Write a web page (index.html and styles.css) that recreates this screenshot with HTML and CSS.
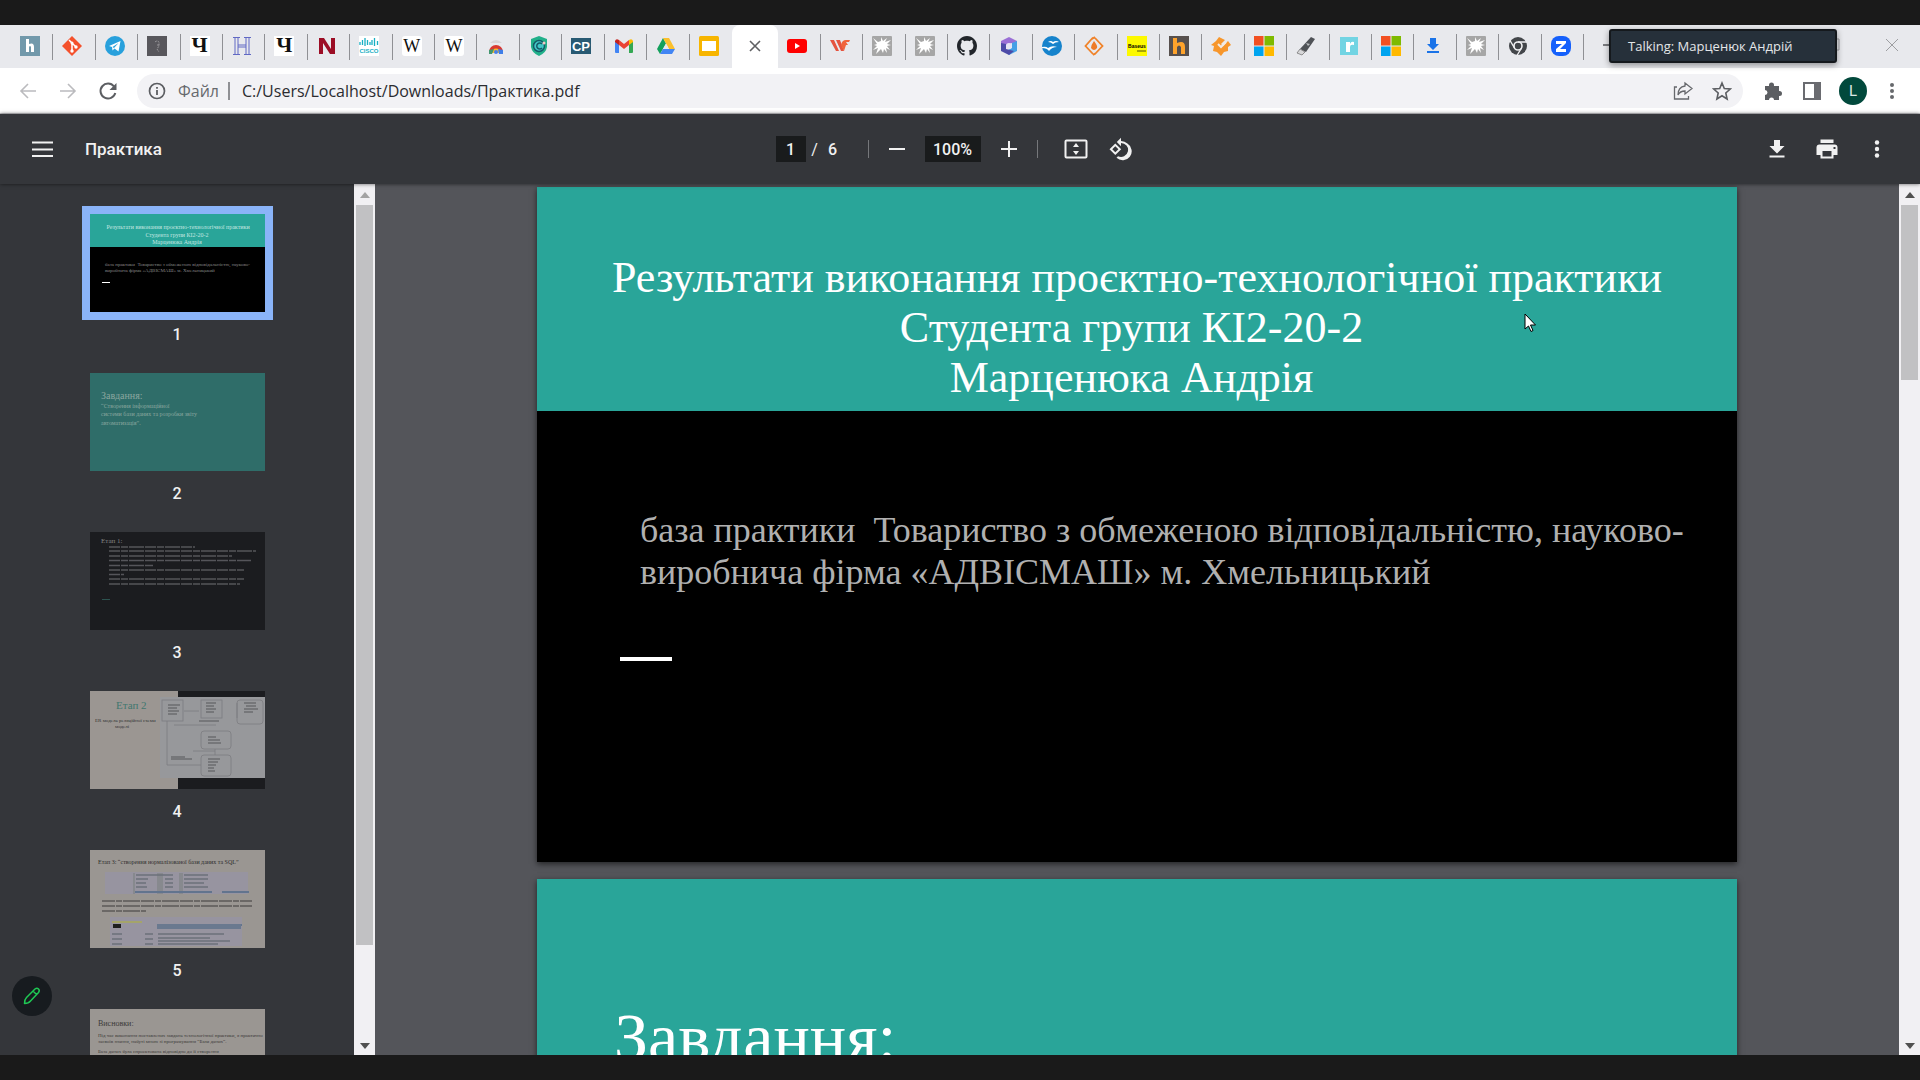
FILE: index.html
```html
<!DOCTYPE html>
<html lang="uk">
<head>
<meta charset="utf-8">
<title>Практика</title>
<link rel="stylesheet" href="styles.css">
</head>
<body>
<svg class="defs" aria-hidden="true">
  <symbol id="splat" viewBox="0 0 20 20"><rect width="20" height="20" rx="1" fill="#a6a6a6"/><path d="M9 5l0-4 2 4 4-3-2 4 6-2-4 4 4 1-4 1 3 4-4-2 1 5-3-4-1 4-2-4-5 5 2-6-5 2 4-4-3-1 3-1-4-6 5 4z" fill="#fff"/></symbol>
  <symbol id="windows" viewBox="0 0 20 20"><path fill="#f25022" d="M0 0h9.500v9.500H0z"/><path fill="#7fba00" d="M10.500 0H20v9.500h-9.500z"/><path fill="#00a4ef" d="M0 10.500h9.500V20H0z"/><path fill="#ffb900" d="M10.500 10.500H20V20h-9.500z"/></symbol>
</svg>

<div class="browser">
  <header class="tabstrip">
    <nav class="tabs" aria-label="Вкладки">
      <a class="tab" href="#"><svg viewBox="0 0 20 20"><rect width="20" height="20" fill="#7299ab"/><path d="M6 3h3v5q5-2 5 3v5h-3v-5q-1-2-2 0v5H6z" fill="#fff"/></svg></a>
      <a class="tab" href="#"><svg viewBox="0 0 20 20"><path d="M10 0l10 10-10 10L0 10z" fill="#f4512c"/><path d="M7 4l3 3v8M10 7l4 4" stroke="#fff" stroke-width="1.500" fill="none"/><circle cx="10" cy="7" r="1.500" fill="#fff"/><circle cx="10" cy="15" r="1.700" fill="#fff"/><circle cx="14" cy="11" r="1.700" fill="#fff"/></svg></a>
      <a class="tab" href="#"><svg viewBox="0 0 20 20"><circle cx="10" cy="10" r="10" fill="#28a0dc"/><path d="M4 10l11.500-5-2 10.500-4-3-2 2-.5-3.500z" fill="#fff"/><path d="M7.500 11l6-4-4.500 5z" fill="#28a0dc"/></svg></a>
      <a class="tab" href="#"><svg viewBox="0 0 20 20"><rect width="20" height="20" fill="#58575c"/><path d="M8 6q2-2 4 0v4l-2 3 2 3M11 8v2" fill="none" stroke="#99979b" stroke-dasharray="2 1"/></svg></a>
      <a class="tab" href="#"><span class="letter letter-bold">Ч</span></a>
      <a class="tab" href="#"><svg viewBox="0 0 20 20"><path d="M1 1.500h7M1 18.500h7M12 1.500h7M12 18.500h7M3 1.500v17M6 1.500v17M14 1.500v17M17 1.500v17M6 9h8M6 11h8" fill="none" stroke="#6068c4"/></svg></a>
      <a class="tab" href="#"><span class="letter letter-bold">Ч</span></a>
      <a class="tab" href="#"><svg viewBox="0 0 20 20"><path d="M2 2h5l7 11V2h4v16h-5L6 7v11H2z" fill="#9c0d25"/></svg></a>
      <a class="tab" href="#"><svg viewBox="0 0 20 20"><rect width="20" height="20" fill="#fff"/><path d="M1 6v3M3.500 4v5M6 2v8M8.500 4v5M11 6v3M13 4v5M15.500 2v8M18.500 5v4" stroke="#18afc4" stroke-width="1.300"/><text class="sans" x="10" y="17" text-anchor="middle" font-size="6" font-weight="bold" fill="#18afc4">CISCO</text></svg></a>
      <a class="tab" href="#"><span class="letter letter-wiki">W</span></a>
      <a class="tab" href="#"><span class="letter letter-wiki">W</span></a>
      <a class="tab" href="#"><svg viewBox="0 0 20 20"><path d="M4 7q6-6 12 0" fill="#d8d5d9"/><path d="M3 16a7 7 0 0 1 14 0z" fill="#d93830"/><path d="M5.500 17a4.500 4.500 0 0 1 9 0z" fill="#f5b82c"/><path d="M3 14l5-1-2 5H3z" fill="#43966f"/><path d="M12 13l5 1v4h-4z" fill="#3f7ee8"/><circle cx="10" cy="16" r="2" fill="#4680ec"/></svg></a>
      <a class="tab" href="#"><svg viewBox="0 0 20 20"><path d="M10 0l8 3v8q-1 6-8 9-7-3-8-9V3z" fill="#21b08a"/><circle cx="10" cy="10" r="5.500" fill="#42c8c8" stroke="#155b67" stroke-width="1.500"/><path d="M13 8a3 3 0 1 0 0 4" fill="none" stroke="#155b67" stroke-width="1.500"/><circle cx="15" cy="7" r="1.500" fill="#f4c6c4"/></svg></a>
      <a class="tab" href="#"><svg viewBox="0 0 20 20"><rect y="2" width="20" height="16" fill="#285a73"/><text class="sans" x="10" y="15" text-anchor="middle" font-size="13" font-weight="bold" fill="#fff">CP</text></svg></a>
      <a class="tab" href="#"><svg viewBox="0 0 20 20"><path d="M1 5l4 3v9H2q-1 0-1-1z" fill="#4285f4"/><path d="M19 5l-4 3v9h3q1 0 1-1z" fill="#34a853"/><path d="M5 4l5 4 5-4v5l-5 4-5-4z" fill="#ea4335"/><path d="M1 5q1-3 4-1v5L1 6z" fill="#c5221f"/><path d="M19 5q-1-3-4-1v5l4-3z" fill="#fbbc04"/></svg></a>
      <a class="tab" href="#"><svg viewBox="0 0 20 20"><path d="M7 2l3 5.500L4 18l-3-5z" fill="#13a05c"/><path d="M7 2h6l6 11h-6z" fill="#fbc02d"/><path d="M7 13h12l-3 5H4z" fill="#4285f4"/><path d="M10 7.500L13 13H7z" fill="#e8e9ed"/></svg></a>
      <a class="tab" href="#"><svg viewBox="0 0 20 20"><rect width="20" height="20" rx="1.500" fill="#f7b500"/><rect x="3" y="5" width="14" height="10" fill="#fff"/></svg></a>
      <a class="tab tab-active" href="#" aria-label="Практика"><svg viewBox="0 0 20 20"><path d="M5 5l10 10M15 5L5 15" stroke="#5f6063" stroke-width="1.600"/></svg></a>
      <a class="tab" href="#"><svg viewBox="0 0 20 20"><rect y="3" width="20" height="14" rx="3" fill="#f00"/><path d="M8 7l5 3-5 3z" fill="#fff"/></svg></a>
      <a class="tab" href="#"><svg viewBox="0 0 20 20"><path d="M0 4h4l5 11H6zM6 4h4l4 11h-3z" fill="#e5533f"/><path d="M14 15l-3-6q1-5 5-5h4l-1 2h-3l2 3h-2l-1 3z" fill="#f0643c"/></svg></a>
      <a class="tab" href="#"><svg><use href="#splat"/></svg></a>
      <a class="tab" href="#"><svg><use href="#splat"/></svg></a>
      <a class="tab" href="#"><svg viewBox="0 0 16 16"><path fill="#22262b" d="M8 0C3.580 0 0 3.580 0 8c0 3.540 2.290 6.530 5.470 7.590.4.070.55-.17.55-.38 0-.19-.01-.82-.01-1.490-2.010.37-2.530-.49-2.690-.94-.09-.23-.48-.94-.82-1.130-.28-.15-.68-.52-.01-.53.63-.01 1.080.58 1.230.82.72 1.210 1.870.87 2.330.66.07-.52.28-.87.51-1.070-1.780-.2-3.640-.89-3.640-3.950 0-.87.31-1.590.82-2.150-.08-.2-.36-1.020.08-2.120 0 0 .67-.21 2.200.82.64-.18 1.320-.27 2-.27s1.360.09 2 .27c1.530-1.040 2.200-.82 2.200-.82.44 1.100.16 1.920.08 2.120.51.56.82 1.270.82 2.150 0 3.070-1.870 3.750-3.650 3.950.29.25.54.73.54 1.480 0 1.070-.01 1.930-.01 2.200 0 .21.15.46.55.38A8.010 8.010 0 0 0 16 8c0-4.420-3.580-8-8-8z"/></svg></a>
      <a class="tab" href="#"><svg viewBox="0 0 20 20"><path d="M10 1l8 4v5l-5-3-6 2-5 5V5z" fill="#9a6fd6"/><path d="M18 5v10l-8 4-3-4 6-3V7z" fill="#45a0e6"/><path d="M2 7v8l8 4 5-4-8-2V8z" fill="#4d4ba8"/><circle cx="10" cy="10" r="3" fill="#e6e4f4"/></svg></a>
      <a class="tab" href="#"><svg viewBox="0 0 20 20"><circle cx="10" cy="10" r="10" fill="#1683cc"/><path d="M6 6q3-2 5 0 3-2 6 0-4 0-6 2-2-2-5-2zM0 11q4-1 6 1 4-3 9-1-5 0-8 4-2-3-7-3z" fill="#fff"/></svg></a>
      <a class="tab" href="#"><svg viewBox="0 0 20 20"><path d="M9 1.500L1.500 10 9 18M11 2l7.500 8-8 8.500M8 3l3-2M12 17l-3 2" fill="none" stroke="#f08228" stroke-width="1.800"/><path d="M10 5q4 5 3 7-3 4-6 0 0-3 3-7z" fill="#ee7b27"/></svg></a>
      <a class="tab" href="#"><svg viewBox="0 0 20 20"><rect width="20" height="20" fill="#fdf900"/><text class="sans" x="10" y="12" text-anchor="middle" font-size="5" font-weight="900">Baseus</text><path d="M10 15h9" stroke="#55530a"/></svg></a>
      <a class="tab" href="#"><svg viewBox="0 0 20 20"><rect width="20" height="20" fill="#57504e"/><path d="M4 2h4v5q8-3 8 4v7h-4v-7q-2-3-4 0v7H4z" fill="#ffa32b"/></svg></a>
      <a class="tab" href="#"><svg viewBox="0 0 20 20"><path d="M8 1l6 3-4 4 2 2 5-5 3 4-3 2v4l-4 1-3 4-4-4-4-1 1-5-3-1 5-4z" fill="#f7962b"/><path d="M7 8l3 3 5-5" stroke="#f2eae4" stroke-width="2" fill="none"/></svg></a>
      <a class="tab" href="#"><svg><use href="#windows"/></svg></a>
      <a class="tab" href="#"><svg viewBox="0 0 20 20"><path d="M15 1l4 2-9 13-6-3z" fill="#4f5257"/><path d="M4 13l5 3-3 3-5-2z" fill="#d7d7d9" stroke="#777" stroke-width=".8"/><path d="M10 7l4 1-2 2z" fill="#b8babd"/></svg></a>
      <a class="tab" href="#"><svg viewBox="0 0 20 20"><rect x="1" y="1" width="18" height="18" fill="#72d4e3"/><path d="M7 6h4v2q1-3 4-2v3q-4-1-4 2v5H7z" fill="#fff"/></svg></a>
      <a class="tab" href="#"><svg><use href="#windows"/></svg></a>
      <a class="tab" href="#"><svg viewBox="0 0 20 20"><path d="M7 2h6v6h3l-6 6-6-6h3zM4 15h12v2H4z" fill="#1a73e8"/></svg></a>
      <a class="tab" href="#"><svg><use href="#splat"/></svg></a>
      <a class="tab" href="#"><svg viewBox="0 0 20 20"><circle cx="10" cy="10" r="9" fill="#43464a"/><circle cx="10" cy="10" r="4" fill="#43464a" stroke="#f1f1f3" stroke-width="1.600"/><path d="M10 6h9M6.500 12L2 4.500M13.500 12L9 19.500" stroke="#f1f1f3" stroke-width="1.400"/></svg></a>
      <a class="tab" href="#"><svg viewBox="0 0 20 20"><rect width="20" height="20" rx="8" fill="#1560fb"/><path d="M5 5h10v2l-6 6h6v3H5v-3l6-5H5z" fill="#fff"/></svg></a>
    </nav>
    <div class="window-controls">
      <svg class="ctl-new" viewBox="0 0 20 20"><path d="M3 10h14M10 3v14" stroke="#55575b" stroke-width="1.500"/></svg>
      <svg class="ctl-max" viewBox="0 0 14 14"><path d="M1 1h11v11H1z" fill="none" stroke="#9d9ea1"/></svg>
      <svg class="ctl-close" viewBox="0 0 14 14"><path d="M1 1l12 12M13 1L1 13" stroke="#9d9ea1"/></svg>
      <div class="talking">Talking: Марценюк Андрій</div>
    </div>
  </header>

  <div class="toolbar">
    <button class="nav-btn" aria-label="Назад"><svg viewBox="0 0 20 20"><path d="M18 10H3M10 3l-7 7 7 7" fill="none" stroke="#bbbbbe" stroke-width="1.600"/></svg></button>
    <button class="nav-btn" aria-label="Вперед"><svg viewBox="0 0 20 20"><path d="M2 10h15M10 3l7 7-7 7" fill="none" stroke="#bbbbbe" stroke-width="1.600"/></svg></button>
    <button class="nav-btn" aria-label="Оновити"><svg viewBox="0 0 20 20"><path d="M16 5.500A7.500 7.500 0 1 0 17.300 12" fill="none" stroke="#5c5e62" stroke-width="2"/><path d="M18.500 2v7h-7z" fill="#5c5e62"/></svg></button>
    <div class="omnibox">
      <svg class="info" viewBox="0 0 18 18"><circle cx="9" cy="9" r="7.500" fill="none" stroke="#5c5e62" stroke-width="1.700"/><path d="M9 8v5M9 5v1.800" stroke="#5c5e62" stroke-width="1.800"/></svg>
      <label class="scheme" for="url">Файл</label>
      <input class="url" id="url" type="text" value="C:/Users/Localhost/Downloads/Практика.pdf">
      <button class="box-btn" aria-label="Поділитися"><svg viewBox="0 0 20 20"><path d="M4 6H1.500v12h14v-3" fill="none" stroke="#66686c" stroke-width="1.300"/><path d="M12 2l7 5.500-7 5.500v-3q-5 0-7 4 0-8 7-9z" fill="none" stroke="#66686c" stroke-width="1.300"/></svg></button>
      <button class="box-btn" aria-label="Закладка"><svg viewBox="0 0 20 20"><path d="M10 2l2.300 5.500 6 .5-4.500 4 1.300 6-5.100-3.200L4.900 18l1.300-6L1.700 8l6-.5z" fill="none" stroke="#5c5e62" stroke-width="1.600"/></svg></button>
    </div>
    <button class="tool-btn" aria-label="Розширення"><svg viewBox="0 0 20 20"><path d="M2 5h4V4a2.500 2.500 0 0 1 5 0v1h5v5h.500a2.500 2.500 0 0 1 0 5H16v4h-5a2.500 2.500 0 0 0-5 0H2v-5a2.500 2.500 0 0 0 0-5z" fill="#5c5e62"/></svg></button>
    <button class="tool-btn" aria-label="Бічна панель"><svg viewBox="0 0 20 20"><rect x="2" y="2" width="16" height="16" fill="none" stroke="#6a6b70" stroke-width="2"/><path d="M12 2h6v16h-6z" fill="#6a6b70"/></svg></button>
    <button class="avatar" aria-label="Профіль">L</button>
    <button class="tool-btn" aria-label="Меню"><svg viewBox="0 0 20 20" fill="#66686c"><circle cx="10" cy="4" r="2"/><circle cx="10" cy="10" r="2"/><circle cx="10" cy="16" r="2"/></svg></button>
  </div>

  <div class="pdfbar">
    <div class="pdf-left">
      <button class="pdf-btn" aria-label="Бічне меню"><svg viewBox="0 0 24 24"><path d="M2 5.500h21M2 12.500h21M2 19h21" stroke="#f1f1f1" stroke-width="2"/></svg></button>
      <h1 class="pdf-title">Практика</h1>
    </div>
    <div class="pdf-mid">
      <input class="field page-no" type="text" value="1" aria-label="Сторінка">
      <span class="slash">/</span><span class="total">6</span>
      <i class="sep"></i>
      <button class="pdf-btn" aria-label="Зменшити"><svg viewBox="0 0 24 24"><path d="M4 12h16" stroke="#f1f1f1" stroke-width="2"/></svg></button>
      <input class="field zoom" type="text" value="100%" aria-label="Масштаб">
      <button class="pdf-btn" aria-label="Збільшити"><svg viewBox="0 0 24 24"><path d="M4 12h16M12 4v16" stroke="#f1f1f1" stroke-width="2"/></svg></button>
      <i class="sep"></i>
      <button class="pdf-btn" aria-label="За розміром сторінки"><svg viewBox="0 0 24 24"><rect x="1.500" y="3.500" width="21" height="17" rx="1" fill="none" stroke="#f1f1f1" stroke-width="2"/><path d="M12 6l3 4H9zM12 18l3-4H9z" fill="#f1f1f1"/></svg></button>
      <button class="pdf-btn rotate" aria-label="Повернути"><svg viewBox="0 0 24 24"><path d="M7.300 6.400L1.500 12.200l5.800 5.900 5.900-5.900zm-3 5.800l3-3 3.100 3-3.100 3.100zM19.400 6.600A9 9 0 0 0 13 4V.8L8.800 5 13 9.200V6a7 7 0 1 1-3 13.300l-1.500 1.500A9 9 0 1 0 19.400 6.600z" fill="#f1f1f1" fill-rule="evenodd"/></svg></button>
    </div>
    <div class="pdf-right">
      <button class="pdf-btn" aria-label="Завантажити"><svg viewBox="0 0 24 24"><path d="M9 3h6v6h4.500L12 16.500 4.500 9H9zM4.500 18.500h15v2h-15z" fill="#f1f1f1"/></svg></button>
      <button class="pdf-btn" aria-label="Друк"><svg viewBox="0 0 24 24"><path d="M5.500 2.500h13V6h-13zM4.500 7.500h15a3 3 0 0 1 3 3V18h-4v3.500h-13V18h-4v-7.500a3 3 0 0 1 3-3zM7.500 14v5.500h9V14zm11-4v2h2v-2z" fill="#f1f1f1" fill-rule="evenodd"/></svg></button>
      <button class="pdf-btn" aria-label="Більше"><svg viewBox="0 0 24 24" fill="#f1f1f1"><circle cx="12" cy="5.500" r="2.200"/><circle cx="12" cy="12" r="2.200"/><circle cx="12" cy="18.500" r="2.200"/></svg></button>
    </div>
  </div>

  <div class="viewer">
    <aside class="sidebar">
      <a class="thumb thumb-active" href="#p1"><svg viewBox="0 0 175 98"><path fill="#000" d="M0 0h175v98H0z"/><path fill="#29a599" d="M0 0h175v33H0z"/><g fill="#c4e6e0" font-size="6" text-anchor="middle"><text x="88" y="15">Результати виконання проєктно-технологічної практики</text><text x="87" y="23">Студента групи КІ2-20-2</text><text x="87" y="30">Марценюка Андрія</text></g><g fill="#858585" font-size="5"><text x="15" y="52">база практики&#160; Товариство з обмеженою відповідальністю, науково-</text><text x="15" y="58">виробнича фірма «АДВІСМАШ» м. Хмельницький</text></g><path fill="#fff" d="M12 68h8v1h-8z"/></svg><span class="num">1</span></a>
      <a class="thumb" href="#p2"><svg viewBox="0 0 175 98"><path fill="#2f6d69" d="M0 0h175v98H0z"/><g fill="#8aa69f" font-size="6"><text x="11" y="26" font-size="10">Завдання:</text><text x="11" y="35">“Створення інформаційної</text><text x="11" y="43">системи бази даних та розробки звіту</text><text x="11" y="52">автоматизація”.</text></g></svg><span class="num">2</span></a>
      <a class="thumb" href="#p3"><svg viewBox="0 0 175 98"><path fill="#1b1c1f" d="M0 0h175v98H0z"/><text x="11" y="11" font-size="7" fill="#858585">Етап 1:</text><path d="M19 15h86M19 19h147M19 24h123M19 28.500h142M19 33.500h44M19 38h135M19 42.500h15M19 47h135M19 52h131" stroke="#55555a" stroke-width="1.600" stroke-dasharray="11 1 7 1 15 1"/><path fill="#2d5350" d="M12 67h8v1h-8z"/></svg><span class="num">3</span></a>
      <a class="thumb" href="#p4"><svg viewBox="0 0 175 98"><path fill="#1b1c1f" d="M0 0h175v98H0z"/><path fill="#9b9692" d="M0 0h88v98H0z"/><path fill="#97989b" d="M70 6h105v81H70z"/><text x="26" y="18" font-size="11" fill="#42776f">Етап 2</text><g font-size="5" fill="#333"><text x="5" y="31">ER модель реляційної схеми</text><text x="25" y="37">моделі</text></g><g fill="none" stroke="#7c7c80" stroke-width=".8"><rect x="72" y="9" width="21" height="21"/><rect x="111" y="9" width="21" height="18"/><rect x="147" y="9" width="26" height="24" rx="3"/><rect x="111" y="40" width="30" height="18" rx="3"/><rect x="111" y="64" width="30" height="21" rx="3"/><path d="M77 30v44h34M125 58v6M103 60h22M84 34h42M94 20h15M147 12v15"/></g><path d="M78 14h12M78 17h9M78 20h11M78 23h9M116 12h10M116 15h8M116 18h10M116 21h8M154 12h12M156 15h10M154 18h14M154 21h9M118 46h8M118 49h12M118 52h13M118 68h12M118 71h10M118 74h8M118 77h6M118 80h7M81 66h14M81 68h21M109 30h20" stroke="#57575b" stroke-width="1.200"/></svg><span class="num">4</span></a>
      <a class="thumb" href="#p5"><svg viewBox="0 0 175 98"><path fill="#9a9692" d="M0 0h175v98H0z"/><text x="8" y="14" font-size="6" fill="#2e2d2c">Етап 3: “створення нормалізованої бази даних та SQL”</text><path fill="#9794a0" d="M15 22h143v22H15zM20 67h132v29H20z"/><path fill="#87898e" d="M43 23h2v21h-2zM67 23h6v21h-6zM89 23h4v21h-4z"/><path d="M46 25h36M46 29h12M46 33h10M46 37h11M75 25h8M75 29h8M75 33h8M75 37h8M94 25h24M94 29h24M94 33h20M94 37h24M68 84h66M68 88h52M68 91h72M68 94h60M22 84h10M22 89h10M22 94h10M55 84h8M55 89h8M55 94h8" stroke="#6c7079" stroke-width="1.400"/><path d="M45 42h77M132 42h27M68 75h84" stroke="#62748e" stroke-width="2"/><path fill="#6a798f" d="M67 74h84v5H67z"/><path fill="#a4a46a" d="M22 71h30v2H22z"/><path fill="#1e1f1f" d="M23 74h8v4h-8z"/><path d="M12 51h150M12 56h150M12 61h44" stroke="#5c5a58" stroke-width="1.600" stroke-dasharray="13 1 6 1 17 1"/></svg><span class="num">5</span></a>
      <a class="thumb" href="#p6"><svg viewBox="0 0 175 98"><path fill="#9a9692" d="M0 0h175v98H0z"/><text x="8" y="17" font-size="8" fill="#3b3a39">Висновки:</text><g font-size="5" fill="#3b3a39"><text x="8" y="28">Під час виконання поставлених завдань технологічної практики, я практично</text><text x="8" y="34">засвоїв знання, набуті мною зі програмування “Бази даних”.</text><text x="8" y="44">База даних була спроєктована відповідно до її створення</text></g></svg></a>
    </aside>
    <div class="scrollbar scrollbar-thumbs"><svg class="arrow arrow-off" viewBox="0 0 10 6"><path d="M5 0l5 6H0z"/></svg><div class="track"><div class="grip"></div></div><svg class="arrow" viewBox="0 0 10 6"><path d="M0 0h10L5 6z"/></svg></div>
    <main class="pages">
      <section class="page" id="p1">
        <h2 class="cover-title">Результати виконання проєктно-технологічної практики<br>Студента групи КІ2-20-2&nbsp;<br>Марценюка Андрія&nbsp;</h2>
        <div class="cover-body">
          <p class="cover-text">база практики&nbsp; Товариство з обмеженою відповідальністю, науково-<br>виробнича фірма «АДВІСМАШ» м. Хмельницький</p>
          <div class="dash"></div>
        </div>
      </section>
      <section class="page page-task" id="p2"><h2 class="task-title">Завдання:</h2></section>
    </main>
    <div class="scrollbar scrollbar-pages"><svg class="arrow" viewBox="0 0 10 6"><path d="M5 0l5 6H0z"/></svg><div class="track"><div class="grip"></div></div><svg class="arrow" viewBox="0 0 10 6"><path d="M0 0h10L5 6z"/></svg></div>
    <button class="annotate" aria-label="Малювати"><svg viewBox="0 0 20 20"><path d="M2.500 17.500q0-4 2-6l8.500-8.500q2-1.500 3.500 0t0 3.500L8.500 15q-2 2.500-6 2.500zM11 5l4 4" fill="none" stroke="#1fc854" stroke-width="1.500" stroke-linejoin="round"/></svg></button>
    <svg class="cursor" viewBox="0 0 12 19"><path d="M1 1v15l3.500-3 2.500 5.500 2-1-2.500-5.500h5z" fill="#fff" stroke="#000"/></svg>
  </div>
</div>
</body>
</html>
```
FILE: styles.css
```css
* { box-sizing: border-box; }

body {
  margin: 0;
  background: #1a1a1a;
  font-family: Roboto, "Noto Sans", sans-serif;
}

button {
  margin: 0;
  padding: 0;
  border: 0;
  background: none;
  font: inherit;
}

svg {
  display: block;
  flex: none;
  font-family: "Liberation Serif", serif;
}
.sans { font-family: "Liberation Sans", sans-serif; }
.defs { position: absolute; width: 0; height: 0; }

.browser {
  display: flex;
  flex-direction: column;
  height: 100vh;
  padding: 25px 0;
}

/* tab strip */
.tabstrip {
  display: flex;
  flex: none;
  height: 43px;
  padding-left: 11px;
  background: #e8e9ed;
}
.tabs { display: flex; flex: 1; min-width: 0; }
.tab {
  display: flex;
  flex: 1 1 0;
  min-width: 0;
  align-items: center;
  padding: 0 0 1px 9px;
  background: linear-gradient(#8f9094, #8f9094) right 9px / 1px 26px no-repeat;
  color: #111;
  text-decoration: none;
}
.tab svg { width: 20px; height: 20px; }
.letter {
  width: 20px;
  height: 20px;
  background: #fff;
  font-family: "Liberation Serif", serif;
  line-height: 20px;
  text-align: center;
}
.letter-bold { font-size: 22px; font-weight: 700; line-height: 18px; }
.letter-wiki { border-radius: 3px; font-size: 18px; }
.tab-active {
  padding-left: 13px;
  border-radius: 8px 8px 0 0;
  background: #fff;
}
.tab:has(+ .tab-active) { background: none; }
.window-controls {
  position: relative;
  display: flex;
  flex: none;
  width: 336px;
  align-items: center;
  padding: 0 21px 4px 16px;
}
.ctl-new { width: 20px; height: 20px; }
.ctl-max { width: 14px; height: 14px; margin-left: auto; }
.ctl-close { width: 14px; height: 14px; margin-left: 44px; }
.talking {
  position: absolute;
  top: 4px;
  left: 25px;
  width: 228px;
  height: 34px;
  padding-left: 17px;
  border: 2px solid #15191d;
  border-radius: 3px;
  background: #26303a;
  box-shadow: 0 2px 6px #0006;
  color: #e4e6e8;
  font: 13px/30px "Open Sans", "Noto Sans", sans-serif;
  white-space: nowrap;
}

/* address bar */
.toolbar {
  display: flex;
  flex: none;
  align-items: center;
  height: 46px;
  padding: 0 14px 0 8px;
  border-bottom: 1px solid #cfcfd2;
  background: #fff;
}
.nav-btn { width: 40px; padding-left: 10px; }
.nav-btn svg, .box-btn svg, .tool-btn svg { width: 20px; height: 20px; }
.omnibox {
  display: flex;
  flex: 1;
  align-items: center;
  height: 34px;
  margin: 0 20px 0 9px;
  padding: 0 11px;
  border-radius: 17px;
  background: #f2f2f5;
}
.info { width: 18px; height: 18px; }
.scheme {
  margin-left: 12px;
  padding-right: 9px;
  border-right: 2px solid #8f9094;
  color: #66696d;
  font: 16px/18px "Open Sans", "Noto Sans", sans-serif;
}
.url {
  flex: 1;
  min-width: 0;
  padding: 0 0 0 12px;
  border: 0;
  background: none;
  color: #2b2c30;
  font: 16px/24px "Open Sans", "Noto Sans", sans-serif;
}
.box-btn { margin-left: 19px; }
.tool-btn { margin-right: 19px; }
.tool-btn:last-child { margin: 0 4px 0 15px; }
.avatar {
  width: 28px;
  height: 28px;
  margin-left: -2px;
  border-radius: 50%;
  background: #02493c;
  color: #dde7e4;
  font-size: 15px;
}

/* document toolbar */
.pdfbar {
  position: relative;
  z-index: 1;
  display: flex;
  flex: none;
  align-items: center;
  height: 70px;
  background: #34363a;
  box-shadow: 0 0 4px #0009;
  color: #f1f1f1;
  font-size: 16px;
}
.pdf-left, .pdf-right { display: flex; flex: 1; align-items: center; }
.pdf-left { gap: 31px; padding-left: 30px; }
.pdf-title { margin: 0; font-size: 17px; font-weight: 500; }
.pdf-right { justify-content: flex-end; gap: 26px; padding-right: 31px; }
.pdf-btn svg { width: 24px; height: 24px; }
.pdf-mid { display: flex; align-items: center; padding-right: 12px; }
.field {
  height: 26px;
  padding: 0;
  border: 0;
  background: #191b1c;
  color: #f1f1f1;
  font: 500 16px Roboto, sans-serif;
  text-align: center;
}
.page-no { width: 30px; }
.slash { width: 18px; text-align: center; }
.total { width: 18px; text-align: center; font-weight: 500; }
.sep { width: 1px; height: 18px; margin: 0 16px 0 26px; background: #76787b; }
.zoom { width: 56px; margin: 0 16px; }
.zoom + .pdf-btn + .sep { margin: 0 26px 0 16px; }
.rotate { margin-left: 20px; }

/* viewer */
.viewer {
  position: relative;
  display: flex;
  flex: 1;
  min-height: 0;
  overflow: hidden;
  background: #54555a;
}
.sidebar {
  display: flex;
  flex: none;
  flex-direction: column;
  align-items: center;
  gap: 30px;
  width: 354px;
  padding-top: 30px;
  overflow: hidden;
  background: #34363a;
}
.thumb {
  flex: none;
  color: #f1f1f1;
  font-size: 16px;
  font-weight: 500;
  text-align: center;
  text-decoration: none;
}
.thumb svg { width: 175px; height: 98px; }
.thumb-active svg { box-shadow: 0 0 0 8px #8ab4f8; }
.num { display: block; padding-top: 14px; line-height: 17px; }

.scrollbar {
  display: flex;
  flex: none;
  flex-direction: column;
  align-items: center;
  width: 21px;
  padding: 8px 2px 6px;
  background: #f1f0f3;
}
.arrow { width: 10px; height: 6px; fill: #505050; }
.arrow-off { fill: #a3a3a3; }
.track { flex: 1; width: 100%; padding: 7px 0; }
.grip { background: #c1c1c3; }
.scrollbar-thumbs .grip { height: 89%; }
.scrollbar-pages .grip { height: 21%; }

.pages {
  display: flex;
  flex: 1;
  flex-direction: column;
  align-items: center;
  gap: 17px;
  min-width: 0;
  padding-top: 3px;
  overflow: hidden;
}
.page {
  display: flex;
  flex: none;
  flex-direction: column;
  width: 1200px;
  height: 675px;
  background: #000;
  box-shadow: 0 2px 6px #0009;
  font-family: "Liberation Serif", serif;
  white-space: nowrap;
}
.cover-title {
  height: 224px;
  margin: 0;
  padding-top: 66px;
  background: #29a599;
  color: #fff;
  font-size: 44px;
  font-weight: 400;
  line-height: 50px;
  text-align: center;
}
.cover-body { padding: 98px 0 0 83px; }
.cover-text {
  margin: 0;
  padding-left: 20px;
  color: #b0b0b0;
  font-size: 36px;
  line-height: 42px;
}
.dash { width: 52px; height: 4px; margin-top: 64px; background: #fff; }
.page-task { background: #29a599; }
.task-title {
  margin: 0;
  padding: 120px 0 0 77px;
  color: #fff;
  font-size: 68px;
  font-weight: 400;
  line-height: 76px;
}

.annotate {
  position: absolute;
  bottom: 39px;
  left: 12px;
  width: 40px;
  height: 40px;
  padding: 10px;
  border-radius: 50%;
  background: #171b1f;
}
.cursor {
  position: absolute;
  top: 129px;
  left: 1524px;
  width: 12px;
  height: 19px;
}
```
